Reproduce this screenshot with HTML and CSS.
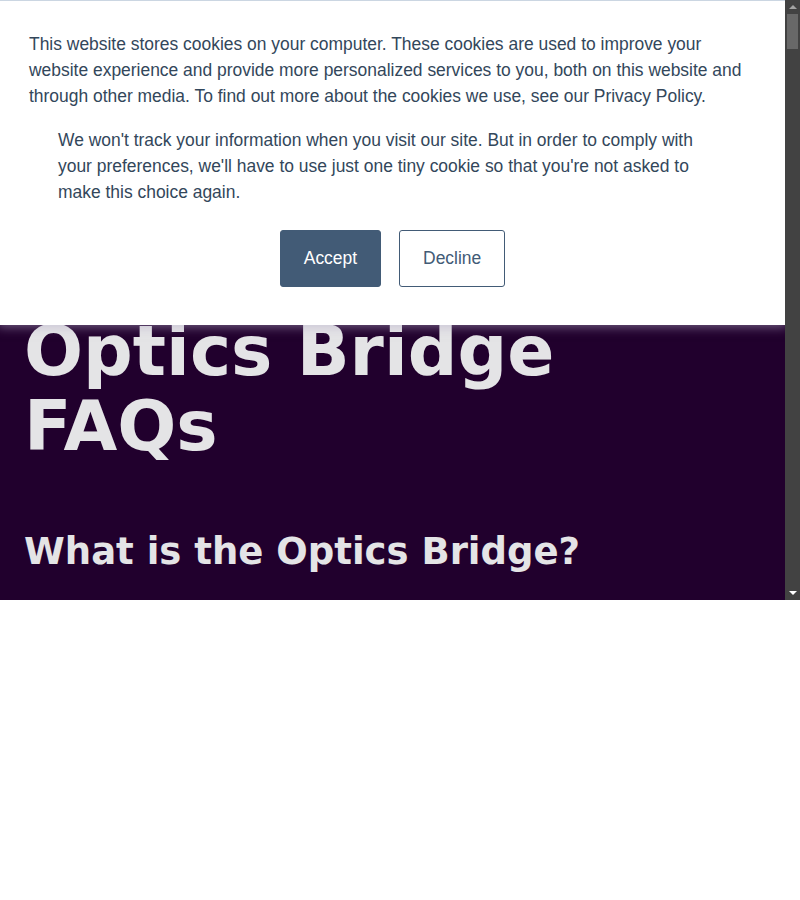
FILE: index.html
```html
<!DOCTYPE html>
<html lang="en">
<head>
<meta charset="utf-8">
<title>Optics Bridge FAQs</title>
<link rel="stylesheet" href="styles.css">
</head>
<body>
<div class="frame">
  <div class="page">
    <main class="content">
      <h1 class="title">Optics Bridge FAQs</h1>
      <h2 class="question">What is the Optics Bridge?</h2>
    </main>
    <div class="banner">
      <p class="banner-text">This website stores cookies on your computer. These cookies are used to improve your website experience and provide more personalized services to you, both on this website and through other media. To find out more about the cookies we use, see our Privacy Policy.</p>
      <p class="banner-text banner-text--inset">We won't track your information when you visit our site. But in order to comply with your preferences, we'll have to use just one tiny cookie so that you're not asked to make this choice again.</p>
      <div class="banner-actions">
        <button class="btn btn--accept">Accept</button>
        <button class="btn btn--decline">Decline</button>
      </div>
    </div>
  </div>
  <div class="scrollbar">
    <div class="arrow arrow--up"></div>
    <div class="thumb"></div>
    <div class="track"></div>
    <div class="arrow arrow--down"></div>
  </div>
</div>
</body>
</html>
```
FILE: styles.css
```css
html, body {
  margin: 0;
  padding: 0;
  background: #ffffff;
}

.frame {
  display: flex;
  width: 800px;
  height: 600px;
}

.page {
  position: relative;
  flex: 1;
  background: #21002d;
  overflow: hidden;
}

.content {
  padding: 314px 24px 0 24px;
  font-family: "DejaVu Sans", sans-serif;
  color: #e4e4e6;
}

.title {
  margin: 0;
  max-width: 640px;
  font-size: 69.5px;
  line-height: 74.8px;
  font-weight: bold;
}

.question {
  margin: 66px 0 0 0;
  font-size: 37px;
  line-height: 1.2;
  font-weight: bold;
}

.banner {
  position: absolute;
  top: 0;
  left: 0;
  right: 0;
  height: 325px;
  box-sizing: border-box;
  background: #ffffff;
  border-top: 1px solid #cbd6e2;
  box-shadow: 0 0 10px 2px rgba(180, 170, 200, 0.55);
  padding: 30px 29px 0 29px;
  font-family: "Liberation Sans", Arial, sans-serif;
  color: #33475b;
}

.banner-text {
  margin: 0;
  font-size: 17.45px;
  line-height: 26px;
}

.banner-text--inset {
  margin: 18px 29px 0 29px;
  max-width: 660px;
}

.banner-actions {
  display: flex;
  justify-content: center;
  gap: 18px;
  margin-top: 25px;
}

.btn {
  font-family: "Liberation Sans", Arial, sans-serif;
  font-size: 17.45px;
  height: 57px;
  border-radius: 3px;
  padding: 0 23px;
  cursor: pointer;
}

.btn--accept {
  background: #425b76;
  color: #ffffff;
  border: 1px solid #425b76;
}

.btn--decline {
  background: #ffffff;
  color: #425b76;
  border: 1px solid #425b76;
}

.scrollbar {
  width: 15px;
  background: #424242;
  display: flex;
  flex-direction: column;
  align-items: center;
}

.arrow {
  width: 0;
  height: 0;
  border-left: 4px solid transparent;
  border-right: 4px solid transparent;
}

.arrow--up {
  margin-top: 5px;
  border-bottom: 4px solid #a3a3a3;
}

.arrow--down {
  margin-bottom: 5px;
  border-top: 4px solid #ffffff;
}

.thumb {
  margin-top: 5px;
  width: 11px;
  height: 35px;
  background: #686868;
}

.track {
  flex: 1;
}
```
